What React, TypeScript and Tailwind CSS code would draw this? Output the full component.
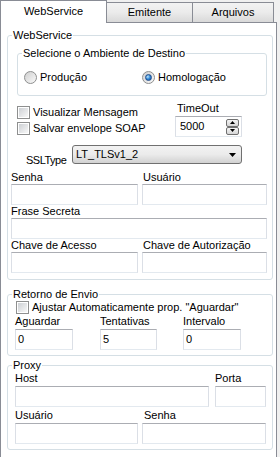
import type { ReactNode } from 'react';

function Edit({ className, value }: { className: string; value?: string }) {
  return (
    <div
      className={`h-[21px] border border-[#dbdfe6] border-t-[#abadb3] border-b-[#e3e9ef] bg-white pl-[2px] flex items-center ${className}`}
    >
      {value}
    </div>
  );
}

function Check({ label }: { label: string }) {
  return (
    <div className="flex items-center h-[13px] whitespace-nowrap">
      <span className="w-[13px] h-[13px] shrink-0 border border-[#8e8f8f] bg-white p-[1px]">
        <span className="block w-full h-full bg-linear-to-br from-[#cdd0d4] to-[#f8f8f8]" />
      </span>
      <span className="ml-[3px]">{label}</span>
    </div>
  );
}

function Radio({ label, checked }: { label: string; checked?: boolean }) {
  return (
    <div className="flex items-center h-[13px]">
      <span className="w-[13px] h-[13px] shrink-0 rounded-full border border-[#8e8f8f] bg-linear-to-br from-[#cfcfcf] to-[#fafafa] flex items-center justify-center">
        {checked && (
          <span className="w-[7px] h-[7px] rounded-full border border-[#214c8c] bg-radial-[at_35%_35%] from-[#bfe6fb] via-[#2c86d6] to-[#1d4f9a]" />
        )}
      </span>
      <span className="ml-[3px]">{label}</span>
    </div>
  );
}

function Group({ title, className, children }: { title: string; className: string; children: ReactNode }) {
  return (
    <fieldset className={`border border-[#d5dfe5] rounded-[3px] ${className}`}>
      <legend className="ml-[4px] px-[1px] h-[13px] leading-[13px]">{title}</legend>
      {children}
    </fieldset>
  );
}

function SpinButton({ up }: { up?: boolean }) {
  return (
    <span className="w-[13px] h-[8px] rounded-[2px] border border-[#707070] bg-linear-to-b from-[#f4f4f4] to-[#d6d6d6] flex items-center justify-center">
      <svg width="5" height="3" viewBox="0 0 5 3">
        <polygon points={up ? '2.5,0 5,3 0,3' : '0,0 5,0 2.5,3'} fill="#000" />
      </svg>
    </span>
  );
}

export default function App() {
  return (
    <div className="w-[280px] h-[457px] overflow-hidden bg-[#f0f0f0] text-black text-[11px] leading-[13px] font-['Liberation_Sans',Arial,sans-serif]">
      {/* Tabs */}
      <div className="flex items-end h-[22px]">
        <div className="relative z-10 w-[107px] h-[23px] -mb-px bg-white border border-b-0 border-[#898c95] flex items-center justify-center pb-[1px]">
          WebService
        </div>
        <div className="w-[86px] h-[20px] border-t border-r border-[#898c95] bg-linear-to-b from-[#f3f3f3] via-[#ebebeb] to-[#d9d9d9] flex items-center justify-center">
          Emitente
        </div>
        <div className="w-[81px] h-[20px] border-t border-r border-[#898c95] bg-linear-to-b from-[#f3f3f3] via-[#ebebeb] to-[#d9d9d9] flex items-center justify-center">
          Arquivos
        </div>
      </div>

      {/* Page */}
      <div className="w-[277px] h-[435px] bg-white border border-b-0 border-[#898c95] pl-[6px] pt-[6px]">
        <Group title="WebService" className="w-[266px] pb-[6px]">
          <Group title="Selecione o Ambiente de Destino" className="mt-[5px] ml-[9px] w-[250px] pt-[11px] pb-[11px]">
            <div className="flex pl-[6px]">
              <div className="w-[118px]">
                <Radio label="Produção" />
              </div>
              <Radio label="Homologação" checked />
            </div>
          </Group>

          <div className="flex mt-[6px] ml-[9px]">
            <div className="w-[158px] flex flex-col gap-[3px] pt-[4px]">
              <Check label="Visualizar Mensagem" />
              <Check label="Salvar envelope SOAP" />
            </div>
            <div className="flex flex-col">
              <span className="pl-[2px]">TimeOut</span>
              <div className="mt-[1px] w-[67px] h-[21px] border border-[#dbdfe6] border-t-[#abadb3] border-b-[#e3e9ef] flex items-center pl-[4px] pr-[2px]">
                <span className="flex-1">5000</span>
                <span className="flex flex-col gap-0">
                  <SpinButton up />
                  <SpinButton />
                </span>
              </div>
            </div>
          </div>

          <div className="flex items-start h-[19px] mt-[8px] pl-[18px]">
            <span className="w-[46px] shrink-0 mt-[9px] whitespace-nowrap tracking-[-0.5px]">SSLType</span>
            <div className="w-[170px] shrink-0 h-[19px] rounded-[3px] border border-[#707070] bg-linear-to-b from-[#f2f2f2] via-[#ebebeb] to-[#d2d2d2] flex items-center pl-[3px] pr-[5px]">
              <span className="flex-1">LT_TLSv1_2</span>
              <svg width="7" height="4" viewBox="0 0 7 4">
                <polygon points="0,0 7,0 3.5,4" fill="#000" />
              </svg>
            </div>
          </div>

          <div className="ml-[3px] mt-[7px] grid grid-cols-[127px_125px] gap-x-[4px]">
            <span>Senha</span>
            <span className="pl-[1px]">Usuário</span>
            <Edit className="w-[127px]" />
            <Edit className="w-[125px]" />
          </div>

          <div className="ml-[3px] flex flex-col">
            <span>Frase Secreta</span>
            <Edit className="w-[256px]" />
          </div>

          <div className="ml-[3px] grid grid-cols-[127px_125px] gap-x-[4px]">
            <span>Chave de Acesso</span>
            <span className="pl-[1px]">Chave de Autorização</span>
            <Edit className="w-[127px]" />
            <Edit className="w-[125px]" />
          </div>
        </Group>

        <Group title="Retorno de Envio" className="mt-[8px] w-[266px] pb-[5px]">
          <div className="ml-[8px]">
            <Check label='Ajustar Automaticamente prop. "Aguardar"' />
          </div>
          <div className="flex ml-[7px] mt-[1px]">
            <div className="w-[58px] flex flex-col">
              <span>Aguardar</span>
              <Edit className="w-[58px] mt-[1px]" value="0" />
            </div>
            <div className="ml-[27px] w-[57px] flex flex-col">
              <span>Tentativas</span>
              <Edit className="w-[57px] mt-[1px]" value="5" />
            </div>
            <div className="ml-[26px] w-[58px] flex flex-col">
              <span>Intervalo</span>
              <Edit className="w-[58px] mt-[1px]" value="0" />
            </div>
          </div>
        </Group>

        <Group title="Proxy" className="mt-[3px] w-[266px] pb-[5px]">
          <div className="flex ml-[7px]">
            <div className="w-[194px] flex flex-col">
              <span>Host</span>
              <Edit className="w-[194px] mt-[1px]" />
            </div>
            <div className="ml-[6px] w-[51px] flex flex-col">
              <span>Porta</span>
              <Edit className="w-[51px] mt-[1px]" />
            </div>
          </div>
          <div className="flex ml-[7px] mt-[2px]">
            <div className="w-[123px] flex flex-col">
              <span>Usuário</span>
              <Edit className="w-[123px] mt-[1px]" />
            </div>
            <div className="ml-[4px] w-[124px] flex flex-col">
              <span className="pl-[2px]">Senha</span>
              <Edit className="w-[124px] mt-[1px]" />
            </div>
          </div>
        </Group>
      </div>
    </div>
  );
}
